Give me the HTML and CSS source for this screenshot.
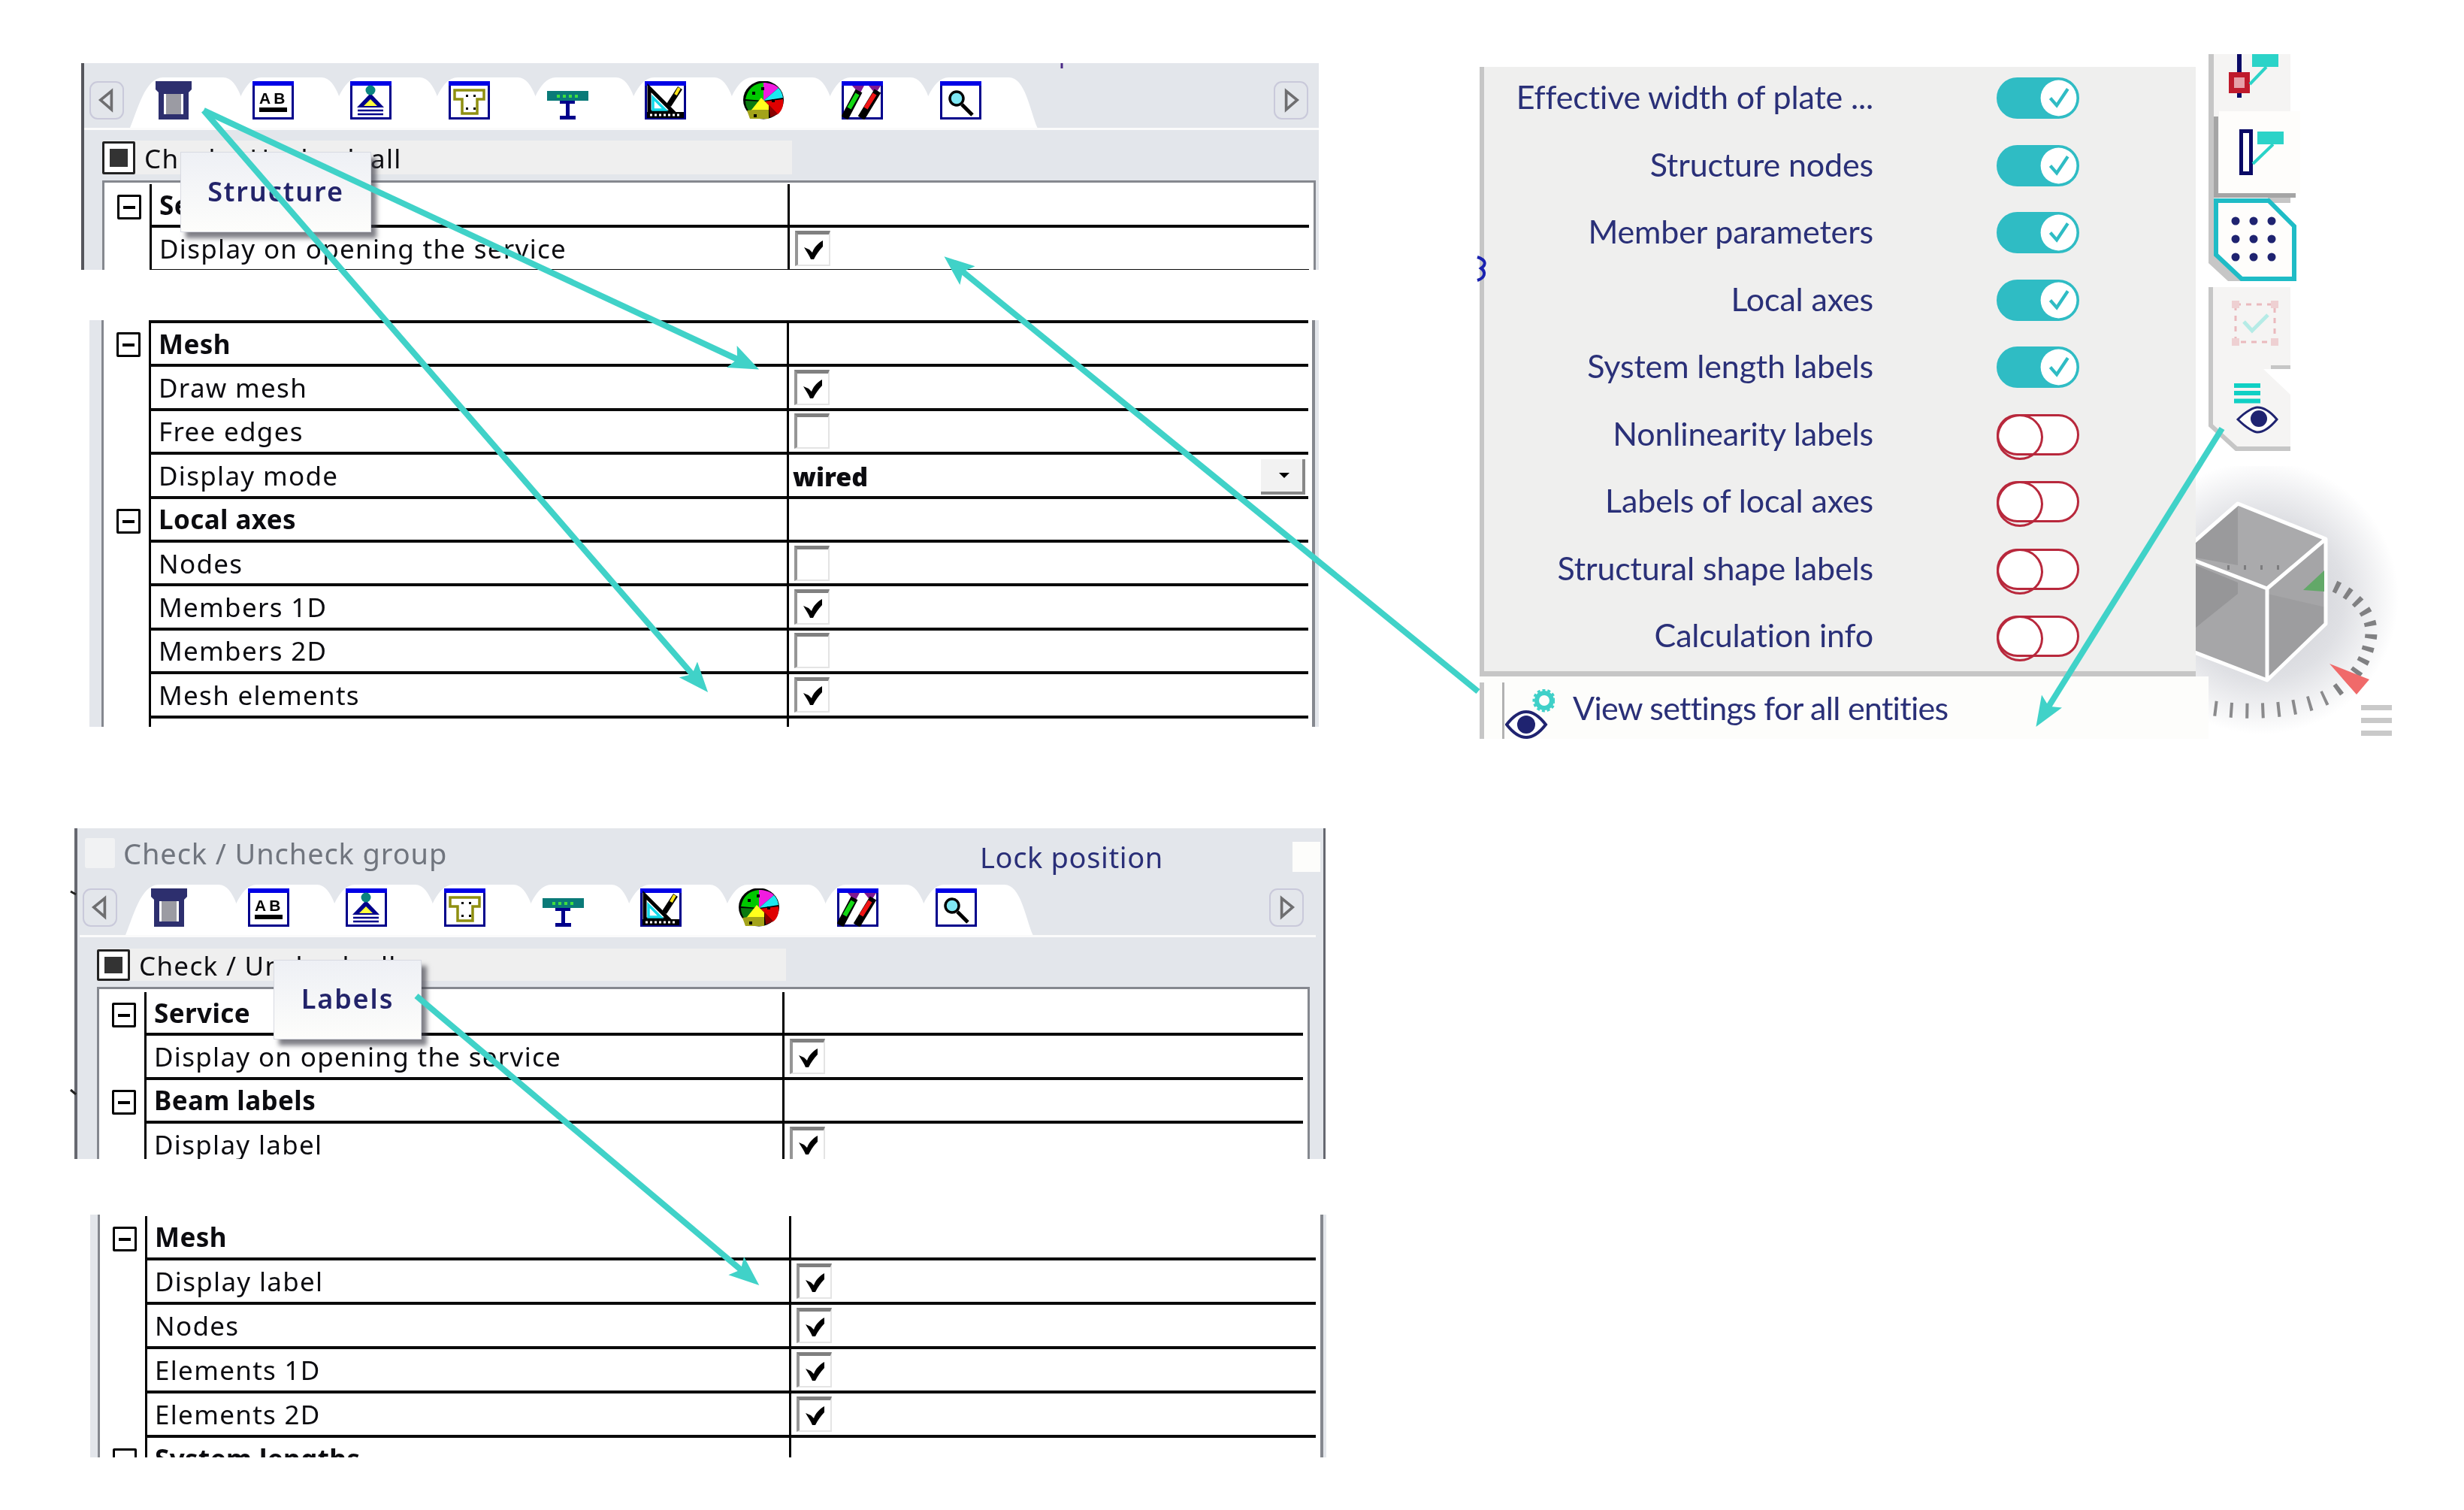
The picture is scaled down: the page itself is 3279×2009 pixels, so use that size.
FILE: index.html
```html
<!DOCTYPE html>
<html lang="en">
<head>
    <meta charset="UTF-8">
    <title>View settings</title>
    <link rel="stylesheet" href="styles.css">
</head>
<body>
<svg class="defs" width="0" height="0">
    <symbol id="i-struct" viewBox="-2 0 55 51">
        <path d="M0 0H48V11L44 15V51H4V15L0 11Z" fill="#2d2f6e"/>
        <rect x="11" y="17" width="26" height="27" fill="#fff"/>
        <rect x="14" y="17" width="20" height="27" fill="#9b9ba3"/>
    </symbol>
    <symbol id="i-ab" viewBox="0 0 55 51">
        <rect x="1.5" y="1.5" width="52" height="48" fill="#fff" stroke="#00008b" stroke-width="3"/>
        <rect width="55" height="6" fill="#0000e6"/>
        <text x="9" y="30" class="ic-text">AB</text>
        <rect x="9" y="35" width="37" height="6" fill="#000"/>
    </symbol>
    <symbol id="i-tri" viewBox="0 0 55 51">
        <rect x="1.5" y="1.5" width="52" height="48" fill="#fff" stroke="#00008b" stroke-width="3"/>
        <rect width="55" height="6" fill="#0000e6"/>
        <path d="M27 16L9 35H45Z" fill="#00008b"/>
        <path d="M27 24L18 33H36Z" fill="#ffff3c"/>
        <circle cx="27" cy="12" r="6.5" fill="#0a8480"/>
        <path d="M10 39H44M10 44H44" stroke="#00008b" stroke-width="2.5"/>
    </symbol>
    <symbol id="i-tee" viewBox="0 0 55 51">
        <rect x="1.5" y="1.5" width="52" height="48" fill="#fff" stroke="#00008b" stroke-width="3"/>
        <rect width="55" height="6" fill="#0000e6"/>
        <path d="M8 12H47V24H38V43H18V24H8Z" fill="#fff" stroke="#8f8f10" stroke-width="3.5"/>
        <path d="M23 18h3v3h-3zM33 18h3v3h-3zM23 35h3v3h-3zM33 35h3v3h-3z" fill="#000"/>
    </symbol>
    <symbol id="i-beam" viewBox="0 0 55 51">
        <rect y="13" width="55" height="13" fill="#0a7a78"/>
        <path d="M13 18h4v4h-4zM21 18h4v4h-4zM29 18h4v4h-4zM37 18h4v4h-4z" fill="#3fe03f"/>
        <path d="M17 26H37V30H30V46H38V51H17V46H25V30H17Z" fill="#00008b"/>
    </symbol>
    <symbol id="i-meas" viewBox="0 0 55 51">
        <rect x="1.5" y="1.5" width="52" height="48" fill="#fff" stroke="#00008b" stroke-width="3"/>
        <rect width="55" height="6" fill="#0000e6"/>
        <path d="M6 9L38 41H6Z" fill="#fff" stroke="#000" stroke-width="5"/>
        <path d="M11 22L27 38H11Z" fill="none" stroke="#12d8e8" stroke-width="3.5"/>
        <path d="M32 32L47 9" stroke="#000" stroke-width="7"/>
        <path d="M41 18L46 9" stroke="#ffe51a" stroke-width="4"/>
        <rect x="3" y="41" width="49" height="8" fill="#000"/>
        <path d="M7 45H48" stroke="#fff" stroke-width="3" stroke-dasharray="3 3"/>
    </symbol>
    <symbol id="i-ball" viewBox="0 0 55 51">
        <ellipse cx="27" cy="25" rx="27" ry="25.5" fill="#000"/>
        <path d="M27 2C14 3 6 10 3 24L27 26Z" fill="#00c800"/>
        <path d="M27 2L27 26L47 9C42 4 34 2 27 2Z" fill="#f01ce0"/>
        <path d="M27 26L47 9C50 12 52 16 53 22Z" fill="#1ce8f0"/>
        <path d="M29 27L53 24C54 34 51 40 46 44Z" fill="#e00000"/>
        <path d="M3 26L24 27L10 42C5 38 3 32 3 26Z" fill="#0a7a10"/>
        <path d="M24 22L8 42V48L34 49V32Z" fill="#ffff1c"/>
        <path d="M5 39L9 50H34V38H14Z" fill="#a3a31a"/>
        <path d="M34 31L46 44L36 48Z" fill="#8a0000"/>
        <path d="M12 14h4v4h-4zM24 8h4v4h-4zM38 24h4v4h-4zM14 44h4v4h-4z" fill="#000"/>
    </symbol>
    <symbol id="i-pens" viewBox="0 0 55 51">
        <rect x="1.5" y="1.5" width="52" height="48" fill="#fff" stroke="#00008b" stroke-width="3"/>
        <rect width="55" height="6" fill="#0000e6"/>
        <path d="M14 6L30 6L24 17ZM36 6L52 6L45 17Z" fill="#80188f"/>
        <path d="M23 13L4 49" stroke="#000" stroke-width="10"/>
        <path d="M48 13L26 49" stroke="#000" stroke-width="10"/>
        <path d="M21 17L10 36" stroke="#14d814" stroke-width="6"/>
        <path d="M44 17L32 36" stroke="#f01414" stroke-width="6"/>
    </symbol>
    <symbol id="i-mag" viewBox="0 0 55 51">
        <rect x="1.5" y="1.5" width="52" height="48" fill="#fff" stroke="#00008b" stroke-width="3"/>
        <rect width="55" height="6" fill="#0000e6"/>
        <circle cx="22" cy="23" r="9" fill="#7fe8f4" stroke="#000" stroke-width="3.5"/>
        <path d="M29 31L43 45" stroke="#000" stroke-width="5"/>
    </symbol>
    <symbol id="i-check" viewBox="0 0 26 25">
        <path d="M0 9L7 12L11 16C13 10 18 4 25 0V8C20 13 16 19 13 25H9C7 20 3 14 0 9Z" fill="#000"/>
    </symbol>
    <symbol id="i-prev" viewBox="0 0 46 51">
        <path d="M30 12L14 25L30 39Z" fill="#e3e6eb" stroke="#6e6e70" stroke-width="4"/>
    </symbol>
    <symbol id="i-next" viewBox="0 0 46 51">
        <path d="M16 12L32 25L16 39Z" fill="#e3e6eb" stroke="#6e6e70" stroke-width="4"/>
    </symbol>
    <symbol id="i-tick" viewBox="0 0 40 40">
        <circle cx="20" cy="20" r="19.5" fill="#fff"/>
        <path d="M11 20L18 28L30 10" fill="none" stroke="#2fbcc4" stroke-width="3.5"/>
    </symbol>
</svg>

<div class="canvas">

    <section class="panel panel-structure">
        <div class="tabbar">
            <div class="scroll-btn"><svg class="ic"><use href="#i-prev"/></svg></div>
            <div class="tabs">
                <div class="tab"><svg class="ic"><use href="#i-struct"/></svg></div>
                <div class="tab"><svg class="ic"><use href="#i-ab"/></svg></div>
                <div class="tab"><svg class="ic"><use href="#i-tri"/></svg></div>
                <div class="tab"><svg class="ic"><use href="#i-tee"/></svg></div>
                <div class="tab"><svg class="ic"><use href="#i-beam"/></svg></div>
                <div class="tab"><svg class="ic"><use href="#i-meas"/></svg></div>
                <div class="tab"><svg class="ic"><use href="#i-ball"/></svg></div>
                <div class="tab"><svg class="ic"><use href="#i-pens"/></svg></div>
                <div class="tab"><svg class="ic"><use href="#i-mag"/></svg></div>
            </div>
            <div class="scroll-btn next"><svg class="ic"><use href="#i-next"/></svg></div>
        </div>
        <div class="checkall"><span class="allbox"></span><span>Check / Uncheck all</span></div>
        <div class="rows framed">
            <div class="row bold"><div class="tree"><i class="minus"></i></div><div class="name">Service</div><div class="val"></div></div>
            <div class="row"><div class="tree"></div><div class="name">Display on opening the service</div><div class="val"><span class="cb"><svg><use href="#i-check"/></svg></span></div></div>
        </div>
        <div class="tooltip">Structure</div>
    </section>

    <section class="panel panel-mesh">
        <div class="rows">
            <div class="row bold first"><div class="tree"><i class="minus"></i></div><div class="name">Mesh</div><div class="val"></div></div>
            <div class="row"><div class="tree"></div><div class="name">Draw mesh</div><div class="val"><span class="cb"><svg><use href="#i-check"/></svg></span></div></div>
            <div class="row"><div class="tree"></div><div class="name">Free edges</div><div class="val"><span class="cb"></span></div></div>
            <div class="row"><div class="tree"></div><div class="name">Display mode</div><div class="val select"><b>wired</b><span class="drop"></span></div></div>
            <div class="row bold"><div class="tree"><i class="minus"></i></div><div class="name">Local axes</div><div class="val"></div></div>
            <div class="row"><div class="tree"></div><div class="name">Nodes</div><div class="val"><span class="cb"></span></div></div>
            <div class="row"><div class="tree"></div><div class="name">Members 1D</div><div class="val"><span class="cb"><svg><use href="#i-check"/></svg></span></div></div>
            <div class="row"><div class="tree"></div><div class="name">Members 2D</div><div class="val"><span class="cb"></span></div></div>
            <div class="row"><div class="tree"></div><div class="name">Mesh elements</div><div class="val"><span class="cb"><svg><use href="#i-check"/></svg></span></div></div>
            <div class="row"><div class="tree"></div><div class="name"></div><div class="val"></div></div>
        </div>
    </section>

    <section class="panel panel-labels">
        <div class="grouprow">
            <span class="groupbox"></span><span class="grouptext">Check / Uncheck group</span>
            <span class="locktext">Lock position</span><span class="lockbox"></span>
        </div>
        <div class="tabbar">
            <div class="scroll-btn"><svg class="ic"><use href="#i-prev"/></svg></div>
            <div class="tabs">
                <div class="tab"><svg class="ic"><use href="#i-struct"/></svg></div>
                <div class="tab"><svg class="ic"><use href="#i-ab"/></svg></div>
                <div class="tab"><svg class="ic"><use href="#i-tri"/></svg></div>
                <div class="tab"><svg class="ic"><use href="#i-tee"/></svg></div>
                <div class="tab"><svg class="ic"><use href="#i-beam"/></svg></div>
                <div class="tab"><svg class="ic"><use href="#i-meas"/></svg></div>
                <div class="tab"><svg class="ic"><use href="#i-ball"/></svg></div>
                <div class="tab"><svg class="ic"><use href="#i-pens"/></svg></div>
                <div class="tab"><svg class="ic"><use href="#i-mag"/></svg></div>
            </div>
            <div class="scroll-btn next"><svg class="ic"><use href="#i-next"/></svg></div>
        </div>
        <div class="checkall"><span class="allbox"></span><span>Check / Uncheck all</span></div>
        <div class="rows framed">
            <div class="row bold"><div class="tree"><i class="minus"></i></div><div class="name">Service</div><div class="val"></div></div>
            <div class="row"><div class="tree"></div><div class="name">Display on opening the service</div><div class="val"><span class="cb"><svg><use href="#i-check"/></svg></span></div></div>
            <div class="row bold"><div class="tree"><i class="minus"></i></div><div class="name">Beam labels</div><div class="val"></div></div>
            <div class="row"><div class="tree"></div><div class="name">Display label</div><div class="val"><span class="cb"><svg><use href="#i-check"/></svg></span></div></div>
        </div>
        <div class="tooltip">Labels</div>
    </section>

    <section class="panel panel-labelmesh">
        <div class="rows">
            <div class="row bold"><div class="tree"><i class="minus"></i></div><div class="name">Mesh</div><div class="val"></div></div>
            <div class="row"><div class="tree"></div><div class="name">Display label</div><div class="val"><span class="cb"><svg><use href="#i-check"/></svg></span></div></div>
            <div class="row"><div class="tree"></div><div class="name">Nodes</div><div class="val"><span class="cb"><svg><use href="#i-check"/></svg></span></div></div>
            <div class="row"><div class="tree"></div><div class="name">Elements 1D</div><div class="val"><span class="cb"><svg><use href="#i-check"/></svg></span></div></div>
            <div class="row"><div class="tree"></div><div class="name">Elements 2D</div><div class="val"><span class="cb"><svg><use href="#i-check"/></svg></span></div></div>
            <div class="row bold"><div class="tree"><i class="minus"></i></div><div class="name">System lengths</div><div class="val"></div></div>
        </div>
    </section>

    <svg class="gizmo" viewBox="2922 620 280 370">
        <defs>
            <radialGradient id="halo">
                <stop offset="0" stop-color="#c8c9cf"/>
                <stop offset=".6" stop-color="#dfe0e4"/>
                <stop offset="1" stop-color="#fff"/>
            </radialGradient>
        </defs>
        <circle cx="3010" cy="795" r="182" fill="url(#halo)"/>
        <path d="M2978 670L3095 717L3017 783L2900 738Z" fill="#aaaaac"/>
        <path d="M2978 670V752L2900 738Z" fill="#9a9a9c"/>
        <path d="M2900 738L3017 783V905L2900 860Z" fill="#a6a6a8"/>
        <path d="M2922 752L2978 775V790L2922 835Z" fill="#969698"/>
        <path d="M3017 783L3095 717V830L3017 905Z" fill="#9d9d9f"/>
        <path d="M3017 783L3095 717V808L3017 790Z" fill="#a5a5a7"/>
        <path d="M2964 755H3045" stroke="#7c7c7e" stroke-width="6" stroke-dasharray="3 19"/>
        <path d="M2900 738L2978 670L3095 717V830L3017 905L2900 860M2900 738L3017 783V905M3017 783L3095 717" fill="none" stroke="#fff" stroke-width="5" stroke-linejoin="round"/>
        <path d="M3093 759V787L3065 785Z" fill="#62a868"/>
        <path d="M3107 780C3140 795 3165 825 3152 860C3146 885 3130 905 3105 922" fill="none" stroke="#808082" stroke-width="16" stroke-dasharray="6 11"/>
        <path d="M3095 928C3060 945 3000 950 2943 942" fill="none" stroke="#8a8a8c" stroke-width="20" stroke-dasharray="4 17"/>
        <path d="M3100 883L3153 904L3136 924Z" fill="#f06a6a"/>
        <path d="M3142 941.5H3183M3142 958.5H3183M3142 975.5H3183" stroke="#c9c9c9" stroke-width="7"/>
    </svg>

    <section class="panel panel-view">
        <div class="view-body">
            <div class="view-row"><span class="view-label">Effective width of plate ...</span><span class="toggle on"><svg><use href="#i-tick"/></svg></span></div>
            <div class="view-row"><span class="view-label">Structure nodes</span><span class="toggle on"><svg><use href="#i-tick"/></svg></span></div>
            <div class="view-row"><span class="view-label">Member parameters</span><span class="toggle on"><svg><use href="#i-tick"/></svg></span></div>
            <div class="view-row"><span class="view-label">Local axes</span><span class="toggle on"><svg><use href="#i-tick"/></svg></span></div>
            <div class="view-row"><span class="view-label">System length labels</span><span class="toggle on"><svg><use href="#i-tick"/></svg></span></div>
            <div class="view-row"><span class="view-label">Nonlinearity labels</span><span class="toggle"></span></div>
            <div class="view-row"><span class="view-label">Labels of local axes</span><span class="toggle"></span></div>
            <div class="view-row"><span class="view-label">Structural shape labels</span><span class="toggle"></span></div>
            <div class="view-row"><span class="view-label">Calculation info</span><span class="toggle"></span></div>
        </div>
        <div class="view-foot">
            <svg class="foot-icon" viewBox="0 0 66 66">
                <circle cx="52" cy="15" r="10" fill="none" stroke="#3fd0c8" stroke-width="6"/>
                <circle cx="52" cy="15" r="14" fill="none" stroke="#3fd0c8" stroke-width="3" stroke-dasharray="4 3"/>
                <path d="M2 47C12 34 20 30 28 30C36 30 44 34 54 47C44 60 36 64 28 64C20 64 12 60 2 47Z" fill="#fff" stroke="#1f2370" stroke-width="4"/>
                <circle cx="28" cy="47" r="12" fill="#1f2370"/>
            </svg>
            <span>View settings for all entities</span>
        </div>
    </section>

    <svg class="sidebar" viewBox="2935 70 130 535">
        <path d="M2939 72H3048V148H2953V264H2939Z" fill="#f5f4f3"/>
        <rect x="2939" y="72" width="7" height="278" fill="#c6c6c6"/>
        <path d="M2980 72V130" stroke="#0a0a66" stroke-width="6"/>
        <rect x="2966" y="96" width="28" height="28" fill="#bf1a2c"/>
        <rect x="2973" y="103" width="14" height="14" fill="#e6a0a8"/>
        <rect x="2997" y="72" width="35" height="17" fill="#2bd3c8"/>
        <path d="M2994 112L3016 89" stroke="#2bd3c8" stroke-width="4"/>

        <rect x="2953" y="148" width="108" height="110" fill="#fefdfb"/>
        <path d="M2949 155V260H3055" fill="none" stroke="#a5a5a5" stroke-width="6"/>
        <rect x="3018" y="263" width="30" height="7" fill="#c6c6c6"/>
        <rect x="2982.500" y="174.500" width="13" height="56" fill="#fff" stroke="#0a0a66" stroke-width="5"/>
        <rect x="3004" y="175" width="35" height="17" fill="#2bd3c8"/>
        <path d="M2998 218L3025 192" stroke="#2bd3c8" stroke-width="4"/>

        <path d="M2939 350L2965 374H2990L2946 335Z" fill="#c6c6c6"/>
        <path d="M2949 267H3019L3053 301V371H2983L2949 339Z" fill="#fefdfb" stroke="#1fbcc6" stroke-width="6"/>
        <g fill="#1f2370">
            <circle cx="2975" cy="294" r="5.500"/><circle cx="2999" cy="294" r="5.500"/><circle cx="3023" cy="294" r="5.500"/>
            <circle cx="2975" cy="318" r="5.500"/><circle cx="2999" cy="318" r="5.500"/><circle cx="3023" cy="318" r="5.500"/>
            <circle cx="2975" cy="342" r="5.500"/><circle cx="2999" cy="342" r="5.500"/><circle cx="3023" cy="342" r="5.500"/>
        </g>

        <path d="M2939 382H3048V491L3012 491L3048 525V595H2976L2939 567Z" fill="#f5f4f3"/>
        <path d="M2942 382V566L2976 597H3048" fill="none" stroke="#c6c6c6" stroke-width="6"/>
        <rect x="2975" y="405" width="52" height="50" fill="none" stroke="#eab9bd" stroke-width="3" stroke-dasharray="7 7"/>
        <path d="M2970 400h10v10h-10zM3022 400h10v10h-10zM2970 450h10v10h-10zM3022 450h10v10h-10z" fill="#eed0d2"/>
        <path d="M2986 428L2997 440L3018 419" fill="none" stroke="#b5ebe6" stroke-width="5"/>
        <rect x="3022" y="486" width="26" height="5" fill="#c6c6c6"/>
        <path d="M2973 513H3008M2973 523H3008M2973 533.500H3008" stroke="#10d0c4" stroke-width="6"/>
        <path d="M2978 558C2990 546 3000 542 3004 542C3012 542 3020 546 3030 558C3020 570 3012 575 3004 575C3000 575 2990 570 2978 558Z" fill="#fefdfb" stroke="#1f2370" stroke-width="3"/>
        <circle cx="3006" cy="557" r="11" fill="#1f2370"/>
    </svg>

    <svg class="arrows" viewBox="0 0 3279 2009">
        <defs>
            <marker id="head" markerUnits="userSpaceOnUse" markerWidth="44" markerHeight="36" refX="20" refY="16" orient="auto">
                <path d="M0 0L40 16L0 32L8 16Z" fill="#40d2c8"/>
            </marker>
        </defs>
        <path d="M1413 84V91" stroke="#4a2a86" stroke-width="3"/>
        <path d="M1966 342C1978 346 1978 352 1971 357C1978 362 1976 370 1966 373" fill="none" stroke="#1a22b0" stroke-width="4"/>
        <path d="M94 1186L101 1190M94 1450L101 1456" stroke="#222" stroke-width="3"/>
        <path class="arrow" d="M271 147L992 483" marker-end="url(#head)"/>
        <path class="arrow" d="M271 147L929 906" marker-end="url(#head)"/>
        <path class="arrow" d="M1967 920L1272 354" marker-end="url(#head)"/>
        <path class="arrow" d="M2957 570L2720 950" marker-end="url(#head)"/>
        <path class="arrow" d="M554 1325L995 1697" marker-end="url(#head)"/>
    </svg>

</div>
</body>
</html>
```

FILE: styles.css
```css
*{
    box-sizing: border-box;
}
body{
    margin: 0;
    background: #fff;
    font-family: "Noto Sans", sans-serif;
    font-size: 35px;
    letter-spacing: 1.3px;
    color: #0c0c10;
}
.defs{
    display: none;
}
.ic-text{
    font-family: "Liberation Sans", sans-serif;
    font-weight: 700;
    font-size: 21px;
    letter-spacing: 4px;
    fill: #000;
}
.canvas{
    position: relative;
    width: 3279px;
    height: 2009px;
    overflow: hidden;
}

/* each screenshot sits on the free canvas */
.panel{
    position: absolute;
    overflow: hidden;
    filter: blur(.5px);
}
.panel-structure{
    left: 108px;
    top: 84px;
    width: 1647px;
    height: 275px;
    padding-top: 19px;
    background: #e3e6eb;
    border-left: 4px solid #55565c;
}
.panel-mesh{
    left: 119px;
    top: 426px;
    width: 1636px;
    height: 541px;
    background: #e3e6eb;
    border-left: 16px solid #e3e6eb;
    border-right: 5px solid #e3e6eb;
}
.panel-mesh .rows{
    border-left: 3px solid #85888f;
    border-right: 4px solid #85888f;
    padding-right: 5px;
    height: 100%;
}
.panel-labels{
    left: 99px;
    top: 1102px;
    width: 1665px;
    height: 440px;
    padding-left: 3px;
    background: #e3e6eb;
    border-left: 4px solid #666870;
    border-right: 3px solid #666870;
}
.panel-labelmesh{
    left: 120px;
    top: 1616px;
    width: 1645px;
    height: 323px;
    border-left: 10px solid #e3e6eb;
    border-right: 4px solid #e3e6eb;
}
.panel-labelmesh .rows{
    --name: 857px;
    --rowh: 59px;
    border-left: 3px solid #85888f;
    border-right: 4px solid #85888f;
    padding: 2px 6px 0 0;
    height: 100%;
}

/* tab bar */
.tabbar{
    display: flex;
    height: 70px;
    border-bottom: 3px solid #fbfbfb;
}
.panel-labels .tabbar{
    margin-right: 10px;
}
.scroll-btn{
    width: 46px;
    height: 51px;
    margin: 5px 0 0 7px;
    border: 2px solid #c9c9da;
    border-radius: 11px;
}
.scroll-btn svg{
    display: block;
    width: 42px;
    height: 47px;
}
.scroll-btn.next{
    margin: 5px 14px 0 auto;
}
.panel-labels .scroll-btn{
    margin-left: 4px;
    margin-top: 5px;
}
.panel-labels .scroll-btn.next{
    margin-left: auto;
    margin-right: 16px;
}
.tabs{
    display: flex;
    margin-left: 8px;
}
.panel-labels .tabs{
    margin-left: 11px;
}
.tab{
    position: relative;
    width: 130.7px;
    padding: 5px 0 0 32px;
}
.tab::before{
    content: "";
    position: absolute;
    left: 0;
    top: 0;
    width: 162px;
    height: 67px;
    background: #fff;
    clip-path: path("M0 67C10 44 20 0 44 0H124C146 0 152 44 162 67Z");
}
.ic{
    position: relative;
    display: block;
    width: 55px;
    height: 51px;
}

/* check all row */
.checkall{
    display: flex;
    align-items: center;
    gap: 12px;
    width: 918px;
    height: 45px;
    margin: 14px 0 8px 24px;
    padding-top: 1px;
    background: #efefef;
}
.panel-labels .checkall{
    width: 917px;
    height: 43px;
    margin: 15px 0 8px 23px;
}
.allbox{
    position: relative;
    flex: none;
    width: 44px;
    height: 100%;
    background: #fff;
    border: 3px solid #222;
    border-radius: 2px;
}
.allbox::after{
    content: "";
    position: absolute;
    inset: 7px 7px;
    background: #333;
}

/* property rows */
.rows{
    --tree: 60px;
    --name: 849px;
    --rowh: 58.4px;
    background: #fff;
}
.rows.framed{
    width: 1615px;
    margin-left: 24px;
    height: 200px;
    padding: 2px 6px 0 0;
    border: 3px solid #85888f;
    border-bottom: 0;
}
.panel-labels .rows.framed{
    width: 1614px;
    margin-left: 23px;
    height: 240px;
    padding-top: 4px;
}
.row{
    display: grid;
    grid-template-columns: var(--tree) var(--name) 1fr;
    height: var(--rowh);
}
.row.first{
    height: 62.4px;
}
.name,
.val{
    display: flex;
    align-items: center;
    border-left: 3px solid #000;
    border-bottom: 4px solid #0a0a0a;
}
.name{
    padding-left: 10px;
    white-space: nowrap;
}
.first .name,
.first .val{
    border-top: 4px solid #0a0a0a;
}
.bold .name{
    font-weight: 700;
    letter-spacing: .4px;
}
.tree{
    display: flex;
    align-items: center;
}
.minus{
    position: relative;
    width: 32px;
    height: 33px;
    margin: 2px 0 0 17px;
    border: 3px solid #000;
    border-radius: 2px;
}
.minus::after{
    content: "";
    position: absolute;
    left: 5px;
    right: 5px;
    top: 12px;
    height: 4px;
    background: #000;
}
.cb{
    display: flex;
    justify-content: center;
    align-items: center;
    width: 47px;
    height: 47px;
    margin-left: 7px;
    background: #fff;
    border-style: solid;
    border-width: 5px 2px 2px 4px;
    border-color: #808080 #e4e4e4 #e4e4e4 #969696;
}
.cb svg{
    width: 26px;
    height: 25px;
}
.select{
    justify-content: space-between;
    padding: 4px 4px 0 5px;
    font-size: 34px;
    letter-spacing: 0;
    font-weight: 700;
}
.drop{
    position: relative;
    width: 59px;
    height: 47px;
    background: #f2f2f2;
    border-right: 4px solid #888;
    border-bottom: 4px solid #888;
}
.drop::after{
    content: "";
    position: absolute;
    left: 24px;
    top: 18px;
    border: 7px solid transparent;
    border-top-color: #000;
    border-bottom: 0;
}

/* tooltips over the grid */
.tooltip{
    position: absolute;
    display: flex;
    justify-content: center;
    align-items: center;
    padding-bottom: 3px;
    color: #23246a;
    font-size: 36px;
    font-weight: 600;
    letter-spacing: 1.9px;
    background: linear-gradient(#eef0f5, #fdfdfb);
    border: 1px solid #d8dae2;
    box-shadow: 7px 8px 6px rgba(60, 60, 70, .65);
}
.panel-structure .tooltip{
    left: 128px;
    top: 118px;
    width: 254px;
    height: 107px;
}
.panel-labels .tooltip{
    left: 261px;
    top: 175px;
    width: 197px;
    height: 106px;
}

/* labels panel header */
.grouprow{
    display: flex;
    align-items: center;
    height: 75px;
    padding-left: 7px;
    font-size: 38px;
    letter-spacing: .9px;
}
.groupbox{
    width: 40px;
    height: 40px;
    margin-bottom: 10px;
    background: #f1f2f3;
    border-radius: 3px;
}
.grouptext{
    margin: 0 0 10px 11px;
    color: #70757e;
}
.locktext{
    margin: 0 0 0 auto;
    color: #2a2f78;
    letter-spacing: .64px;
}
.lockbox{
    width: 37px;
    height: 40px;
    margin: 0 4px 0 172px;
    background: #fdfdfb;
}

/* view settings panel */
.panel-view{
    left: 1969px;
    top: 89px;
    width: 970px;
    height: 894px;
    display: flex;
    flex-direction: column;
    align-items: flex-start;
    color: #2a3078;
    font-family: Lato, sans-serif;
    font-size: 43px;
    letter-spacing: -.15px;
}
.view-body{
    display: flex;
    flex-direction: column;
    gap: 34.5px;
    width: 953px;
    height: 811px;
    padding-top: 14px;
    background: #efefee;
    border-left: 6px solid #c6c6c6;
    border-bottom: 7px solid #c6c6c6;
}
.view-row{
    display: flex;
    align-items: center;
    height: 55px;
}
.view-label{
    width: 518px;
    padding-bottom: 4px;
    text-align: right;
    white-space: nowrap;
}
.toggle{
    position: relative;
    width: 110px;
    height: 55px;
    margin-left: 164px;
    background: #fff;
    border: 3px solid #b8283c;
    border-radius: 28px;
}
.toggle::before{
    content: "";
    position: absolute;
    left: -3px;
    top: -3px;
    width: 56px;
    height: 55px;
    border: 3px solid #b8283c;
    border-radius: 50%;
}
.toggle.on{
    background: #2fbcc4;
    border-color: #2fbcc4;
}
.toggle.on::before{
    display: none;
}
.toggle svg{
    position: absolute;
    right: 0;
    top: 0;
    width: 49px;
    height: 49px;
}
.view-foot{
    position: relative;
    display: flex;
    align-items: center;
    width: 100%;
    height: 83px;
    padding-left: 124px;
    letter-spacing: -.7px;
    background: #fdfdfb;
}
.view-foot::before{
    content: "";
    position: absolute;
    left: 0;
    top: 8px;
    bottom: 0;
    width: 24px;
    border-left: 6px solid #c6c6c6;
    border-right: 3px solid #b2b2b2;
}
.foot-icon{
    position: absolute;
    left: 34px;
    top: 17px;
    width: 66px;
    height: 66px;
}

/* right hand icon strip and view cube */
.sidebar{
    position: absolute;
    left: 2935px;
    top: 70px;
    width: 130px;
    height: 535px;
    filter: blur(.5px);
}
.gizmo{
    position: absolute;
    left: 2922px;
    top: 620px;
    width: 280px;
    height: 370px;
    filter: blur(.5px);
}
.arrows{
    position: absolute;
    left: 0;
    top: 0;
    width: 3279px;
    height: 2009px;
    pointer-events: none;
}
.arrow{
    fill: none;
    stroke: #40d2c8;
    stroke-width: 8;
}
```
